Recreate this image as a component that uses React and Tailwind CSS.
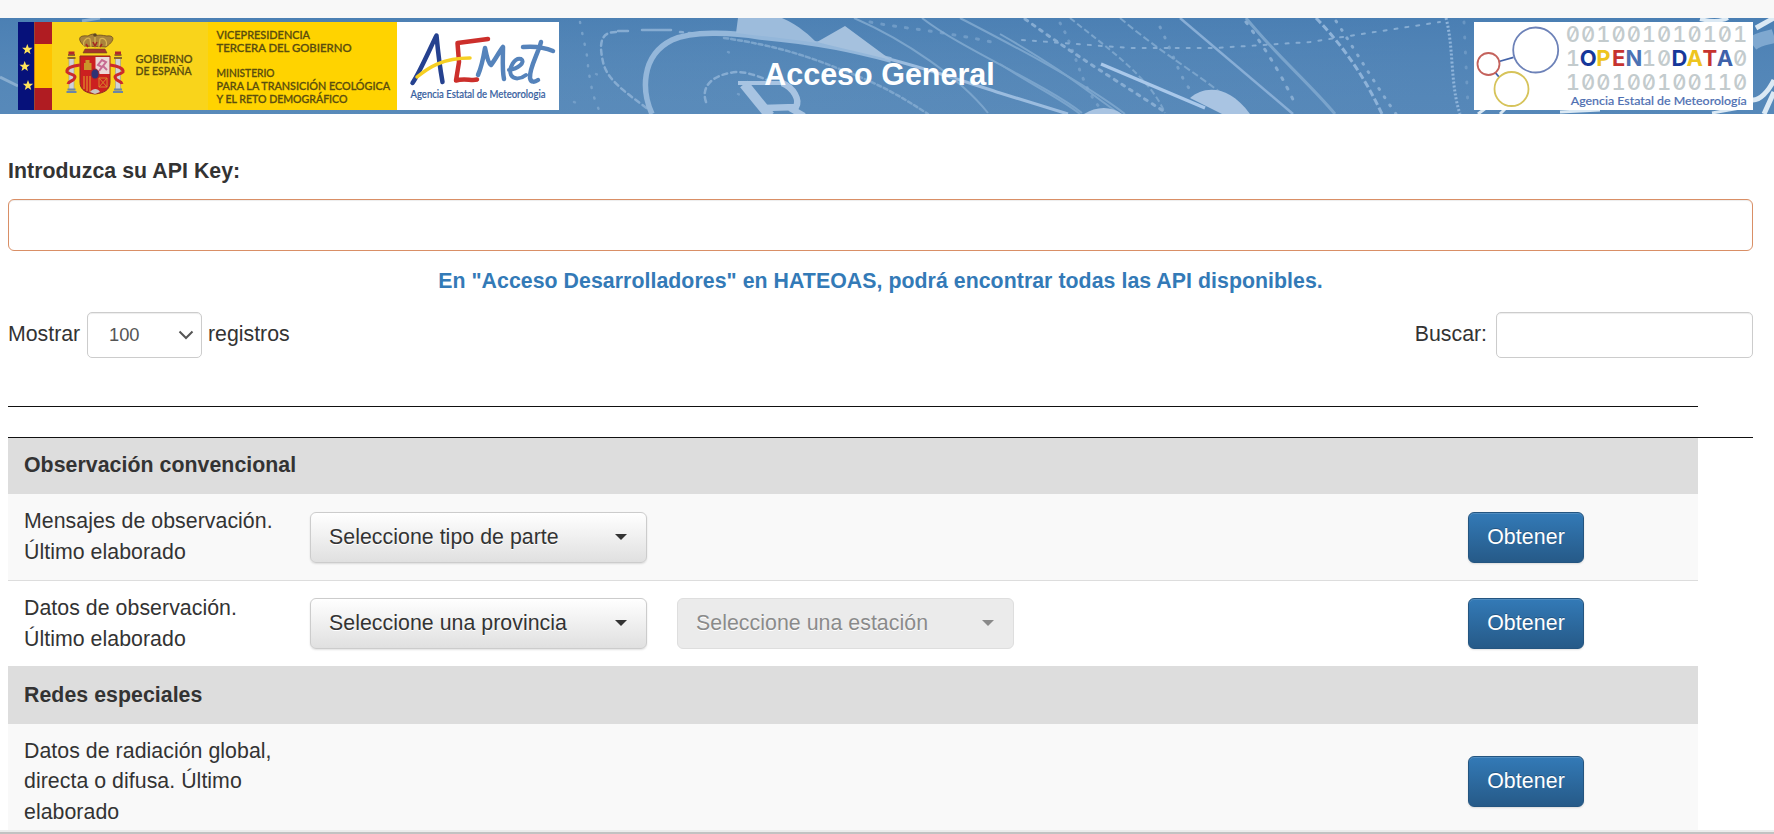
import React from "react";

const dots = { fill: "none", stroke: "#86acd2", strokeLinecap: "round" };

function BannerBackground() {
  return (
    <svg className="absolute inset-0 h-full w-full" viewBox="0 0 1774 96" preserveAspectRatio="none" aria-hidden="true">
      <defs>
        <linearGradient id="sky" x1="0" y1="0" x2="1" y2="0">
          <stop offset="0" stopColor="#5285b7" />
          <stop offset="0.45" stopColor="#5688b8" />
          <stop offset="0.8" stopColor="#5083b6" />
          <stop offset="1" stopColor="#5084b7" />
        </linearGradient>
        <linearGradient id="shade" x1="0" y1="0" x2="0" y2="1">
          <stop offset="0" stopColor="#447ab0" stopOpacity="0.5" />
          <stop offset="1" stopColor="#6795c0" stopOpacity="0.25" />
        </linearGradient>
      </defs>
      <rect width="1774" height="96" fill="url(#sky)" />
      <rect width="1774" height="96" fill="url(#shade)" />
      <g fill="none" stroke="#88add0" strokeWidth="3">
        <path d="M0 59 L18 68" />
        <path d="M82 3 L100 0" />
      </g>
      <g {...dots} strokeWidth="2.5">
        <path d="M580 4 C584 25 588 38 588 48 C590 62 592 78 600 94" strokeDasharray="1 10" opacity="0.7" />
        <path d="M618 13 L628 13 M642 12 L671 12" />
        <path d="M616 14 C598 14 600 30 603 44 C607 62 625 74 652 94" strokeDasharray="5 4" />
        <path d="M680 14 L700 16" strokeDasharray="3 6" />
        <path d="M724 20 C780 28 812 40 842 52 C880 66 900 78 928 96" strokeDasharray="4 3" opacity="0.8" />
        <path d="M706 84 C700 66 716 56 736 54 C750 54 762 60 772 64" strokeDasharray="5 4" />
        <path d="M574 84 L580 86 M596 56 L600 58 M728 34 L732 36 M738 76 L742 78" strokeDasharray="1 8" opacity="0.6" />
      </g>
      <path d="M652 96 C642 74 640 38 672 22 C692 13 730 14 760 19 C820 24 860 34 891 42" fill="none" stroke="#94b7da" strokeWidth="5.5" />
      <path d="M885 40 C925 50 960 62 1000 75 L1068 96" fill="none" stroke="#9bbcdf" strokeWidth="3" />
      <path d="M738 0 L782 0 C800 8 810 18 817 25 C790 21 760 18 736 15 Z" fill="#9dbcdc" />
      <path d="M817 24 L845 8 L891 42 C868 36 840 30 817 24 Z" fill="#a5c1de" />
      <g fill="none" stroke="#a8c4e2" strokeWidth="6.5">
        <path d="M738 65 L782 65" strokeWidth="4" />
        <path d="M744 66 L770 98" strokeWidth="10" />
        <path d="M782 65 C794 70 800 82 796 89 L764 90" />
        <path d="M790 90 L804 98" />
      </g>
      <g fill="none" stroke="#7aa4cc" strokeWidth="2">
        <path d="M854 0 C905 22 960 60 988 95" />
        <path d="M922 0 C960 30 1045 66 1082 95" />
        <path d="M960 0 C1010 26 1080 62 1125 96" />
        <path d="M1070 0 C1110 32 1150 60 1165 95" strokeDasharray="6 3" />
        <path d="M1120 0 C1160 34 1195 54 1222 76" strokeDasharray="7 3" />
        <path d="M1180 0 L1293 96" stroke="#88aed6" strokeWidth="2.5" />
        <path d="M1246 0 C1275 36 1310 66 1335 96" strokeWidth="3" />
        <path d="M1316 0 C1345 30 1365 60 1382 96" stroke="#8eb3d9" strokeWidth="3" strokeDasharray="7 3" />
        <path d="M1446 0 C1454 30 1450 66 1460 96" stroke="#8fb4da" strokeWidth="3" strokeDasharray="2 2" />
        <path d="M1000 16 C1070 56 1090 76 1120 96" />
        <path d="M1000 46 C1030 66 1060 80 1080 96" />
      </g>
      <g {...dots} strokeWidth="3">
        <path d="M1025 1 C1065 30 1090 46 1165 94" strokeDasharray="3 6" />
        <path d="M1022 22 L1130 30 L1215 30 L1310 24 L1440 4" strokeDasharray="3 8" strokeWidth="2" />
        <path d="M1060 5 C1075 30 1080 66 1100 90" strokeDasharray="1 9" opacity="0.6" />
        <path d="M1160 9 C1175 40 1180 60 1192 74" strokeDasharray="1 10" opacity="0.7" />
        <path d="M1246 4 C1272 40 1285 64 1296 88" strokeDasharray="2 9" />
        <path d="M1336 3 C1360 40 1375 66 1396 96" strokeDasharray="1 9" />
        <path d="M870 4 C900 10 950 14 1000 26" strokeDasharray="2 10" opacity="0.6" />
        <path d="M1464 4 L1468 90" strokeDasharray="1 14" opacity="0.5" />
      </g>
      <path d="M1101 46 L1205 90" stroke="#a9c8ea" strokeWidth="3.5" />
      <path d="M1190 80 C1204 68 1228 66 1250 96 L1222 96 Z" fill="#a9c4e2" />
      <path d="M1084 96 C1096 88 1112 88 1122 96 Z" fill="#a9c4e2" />
      <g fill="none" stroke="#dbe9f4" strokeWidth="4">
        <path d="M1700 1 C1712 4 1722 3 1728 0" />
        <path d="M1756 10 L1774 0" strokeWidth="5" />
        <path d="M1752 26 C1760 20 1768 20 1774 18" stroke="#7fa8d0" strokeWidth="14" />
        <path d="M1753 82 C1760 82 1768 74 1774 62 M1764 96 L1774 74" strokeWidth="5" />
        <path d="M1478 96 L1486 90 M1500 96 L1506 90 M1560 94 L1600 92 M1712 95 L1740 90" strokeWidth="3" />
      </g>
    </svg>
  );
}

function Star({ x, y }) {
  return (
    <path
      transform={`translate(${x} ${y})`}
      fill="#ffe45a"
      d="M0 -5.5 L1.4 -1.8 L5.2 -1.7 L2.2 .7 L3.2 4.5 L0 2.3 L-3.2 4.5 L-2.2 .7 L-5.2 -1.7 L-1.4 -1.8 Z"
    />
  );
}

function CoatOfArms() {
  return (
    <g>
      <path d="M66 24 C58 16 62 13 70 14 C74 11 79 12 76 14 C82 12 87 14 89 14 C96 13 98 18 88 25 Z" fill="#a9843c" stroke="#6b4a1e" strokeWidth=".8" />
      <path d="M67 27 L87 27 L89 31 L65 31 Z" fill="#a5342b" stroke="#6d4a20" strokeWidth=".6" />
      <path d="M66 24 C64 18 70 15 72 17 L73 25 M88 24 C90 18 85 15 82 17 L81 25 M77 13 L77 25" fill="none" stroke="#d9b550" strokeWidth="1.2" />
      <path d="M68 22 L70 25 M84 22 L82 25 M75 20 L77 24 L79 20" stroke="#a42a22" strokeWidth="1.6" fill="none" />
      <circle cx="77" cy="13" r="1.8" fill="#5f4724" />
      <path d="M62 34 H92 V60 C92 68 86 71 77 72 C68 71 62 68 62 60 Z" fill="#cc2020" stroke="#8d2c22" />
      <path d="M77.5 35 H91.5 V52 H77.5 Z" fill="#ecd8d8" />
      <path d="M81 49 L84 45 L80 43 L84 38 L88 40 L85 44 L89 48" fill="none" stroke="#c76b93" strokeWidth="2" />
      <path d="M66 48 V41 H67.500 V38 H71.500 V41 H73.500 V48 Z" fill="#c9952a" />
      <path d="M66 54 V67 M69 54 V69 M72 54 V70" stroke="#e0912a" strokeWidth="1.2" />
      <path d="M81 56 H89 V65 H81 Z M81 56 L89 65 M89 56 L81 65" fill="none" stroke="#d9852a" />
      <path d="M72 70 C75 66 80 66 82 70 L77 72 Z" fill="#c9c4c0" />
      <ellipse cx="77" cy="52" rx="4" ry="5" fill="#2d3274" stroke="#a3262a" />
      {[53.5, 100].map((x) => (
        <g key={x}>
          <rect x={x - 2.5} y="36" width="5" height="32" fill="#cfd3d8" stroke="#9a9a92" strokeWidth=".6" />
          <path d={`M${x - 4} 36 h8 M${x - 3.5} 33 h7`} stroke="#8c6a2a" strokeWidth="2" />
          <path d={`M${x - 3} 31 h6`} stroke="#b4282a" strokeWidth="3" />
          <path d={`M${x - 5} 70 h10 M${x - 4} 67.5 h8`} stroke="#6c86a6" strokeWidth="2" />
        </g>
      ))}
      <path d="M62 43 C54 44 48 46 49 50 C52 53 57 52 57 55 C56 60 51 58 50 62 M92 43 C99 44 106 46 105 50 C102 53 97 52 97 55 C98 60 103 58 104 62" fill="none" stroke="#cb2a2c" strokeWidth="3" />
    </g>
  );
}

function GovernmentLogo() {
  return (
    <svg className="h-[88px] w-[541px] shrink-0" viewBox="0 0 541 88">
      <rect width="541" height="88" fill="#fff" />
      <rect width="190" height="88" fill="#f9d41b" />
      <rect x="190" width="189" height="88" fill="#ffd300" />
      <rect width="16.5" height="88" fill="#06117a" />
      <rect x="16.5" width="17.5" height="88" fill="#b01c22" />
      <rect x="16.5" y="22" width="17.5" height="44" fill="#ffc400" />
      <Star x={9.3} y={27.5} />
      <Star x={6.7} y={44.5} />
      <Star x={10} y={63.5} />
      <CoatOfArms />
      <g fill="#5a4d0e" stroke="#5a4d0e" strokeWidth=".3" fontFamily="Lato, sans-serif" fontSize="11" fontWeight="500">
        <text x="117.5" y="41" textLength="57" lengthAdjust="spacingAndGlyphs">GOBIERNO</text>
        <text x="117.5" y="52.5" textLength="56" lengthAdjust="spacingAndGlyphs">DE ESPAÑA</text>
        <text x="198.5" y="16.5" textLength="93.5" lengthAdjust="spacingAndGlyphs">VICEPRESIDENCIA</text>
        <text x="198.5" y="29.5" textLength="135" lengthAdjust="spacingAndGlyphs">TERCERA DEL GOBIERNO</text>
        <text x="198.5" y="55" textLength="58" lengthAdjust="spacingAndGlyphs">MINISTERIO</text>
        <text x="198.5" y="67.7" textLength="173.5" lengthAdjust="spacingAndGlyphs">PARA LA TRANSICIÓN ECOLÓGICA</text>
        <text x="198.5" y="80.5" textLength="131" lengthAdjust="spacingAndGlyphs">Y EL RETO DEMOGRÁFICO</text>
      </g>
      <g fill="none" strokeLinecap="round" strokeLinejoin="round">
        <path d="M394.500 61 C402 50 414 22 418.500 13.500 C420 30 422 46 424.500 60" stroke="#25418f" strokeWidth="4.500" />
        <path d="M470 17 L439.500 21 L441 40 L438 58.500 C446 56 454 59 459 57.500" stroke="#cc2f2b" strokeWidth="4.500" />
        <path d="M399 55 C410 46 424 36 452 36" stroke="#f6cf22" strokeWidth="3.500" />
        <path d="M460 53 C464 44 466 32 467 26 C469 36 471 42 473 43 C477 38 481 30 485 25 C485 36 484 48 486 57" stroke="#5583bb" strokeWidth="4.500" />
        <path d="M491 48 C500 47 508 40 503 37 C497 35 490 46 493 53 C496 58 503 57 508 53" stroke="#5583bb" strokeWidth="4" />
        <path d="M523 20 C520 32 511 46 512 56 C513 61 517 60 520 58 M505 25 C516 24 528 26 535 29" stroke="#5583bb" strokeWidth="4.500" />
      </g>
      <text x="392.5" y="76.2" fontFamily="Lato, sans-serif" fontSize="11" fontWeight="500" fill="#385f9f" stroke="#385f9f" strokeWidth=".2" textLength="135" lengthAdjust="spacingAndGlyphs">Agencia Estatal de Meteorologia</text>
    </svg>
  );
}

const columns = [99, 114.2, 129.4, 144.6, 159.8, 175, 190.2, 205.4, 220.6, 235.8, 251, 266.2];

const digitRows = [
  { y: 20, chars: "001001010101" },
  { y: 44, chars: "1OPEN10DATA0" },
  { y: 67.5, chars: "100100100110" },
];

const letterColors = { 1: "#16389a", 2: "#eec51f", 3: "#c6332f", 4: "#4c72b4", 7: "#16389a", 8: "#eec51f", 9: "#c6332f", 10: "#3f62aa" };

function OpenDataLogo() {
  return (
    <svg className="h-[88px] w-[279px] shrink-0" viewBox="0 0 279 88">
      <rect width="279" height="88" fill="#fff" />
      <g fill="none" strokeWidth="1.8">
        <path d="M25 39.500 L39.500 35.300 M21.300 50.700 L25.500 55.500" stroke="#4463a8" />
        <circle cx="61.7" cy="28" r="22.5" stroke="#6d82b8" />
        <circle cx="14.5" cy="42" r="11" stroke="#c4625c" />
        <circle cx="37.5" cy="67" r="17" stroke="#d6c35a" />
      </g>
      <g fontFamily="Inter, sans-serif" fontSize="22" textAnchor="middle" className="[font-feature-settings:'zero','tnum']">
        {digitRows.map((row, r) =>
          row.chars.split("").map((c, i) => {
            const accent = r === 1 && letterColors[i];
            return (
              <text key={`${r}-${i}`} x={columns[i]} y={row.y} fill={accent || "#c3cbcd"} fontWeight={accent ? 700 : 500}>
                {c}
              </text>
            );
          })
        )}
      </g>
      <text x="96.7" y="82.5" fontFamily="Lato, sans-serif" fontSize="12" fontWeight="500" fill="#4f70b2" stroke="#4f70b2" strokeWidth=".15" textLength="176" lengthAdjust="spacingAndGlyphs">Agencia Estatal de Meteorología</text>
    </svg>
  );
}

function PickerButton({ children, disabled }) {
  return (
    <button
      disabled={disabled}
      className={
        disabled
          ? "flex h-[51px] w-[337px] items-center justify-between rounded-[6px] border border-[#dedede] bg-[#ebebeb] pr-[19px] pb-px pl-[18px] tracking-[0.05px] text-[#8a8a8a] [text-shadow:0_1px_0_#fff]"
          : "flex h-[51px] w-[337px] items-center justify-between rounded-[6px] border border-[#ccc] bg-linear-to-b from-white to-[#e0e0e0] pr-[19px] pb-px pl-[18px] tracking-[0.05px] text-[#333] shadow-[inset_0_1px_0_rgba(255,255,255,0.15),0_1px_2px_rgba(0,0,0,0.12)] [text-shadow:0_1px_0_#fff]"
      }
    >
      <span>{children}</span>
      <span className="border-x-[6px] border-t-[6px] border-x-transparent border-t-current" />
    </button>
  );
}

function GetButton() {
  return (
    <button className="h-[51px] w-[116px] rounded-[6px] border border-[#245580] bg-linear-to-b from-[#337ab7] to-[#265a88] pb-px tracking-[0.1px] text-white shadow-[inset_0_1px_0_rgba(255,255,255,0.15),0_1px_2px_rgba(0,0,0,0.12)] [text-shadow:0_-1px_0_rgba(0,0,0,0.25)]">
      Obtener
    </button>
  );
}

function GroupRow({ className, children }) {
  return <div className={`flex w-[1690px] items-center bg-[#ddd] px-4 font-bold tracking-[0.05px] ${className}`}>{children}</div>;
}

function DataRow({ className, lines, children }) {
  return (
    <div className={`flex w-[1690px] items-center pl-4 ${className}`}>
      <div className="w-[286px] shrink-0 leading-[30.600px] tracking-[0.05px]">
        {lines.map((line) => (
          <div key={line}>{line}</div>
        ))}
      </div>
      <div className="flex flex-1 gap-[30px]">{children}</div>
      <div className="w-[230px] shrink-0">
        <GetButton />
      </div>
    </div>
  );
}

export default function App() {
  return (
    <div className="flex h-[834px] w-[1774px] flex-col overflow-hidden bg-white font-['Liberation_Sans',Arial,sans-serif] text-[21.300px] leading-[30px] text-[#333]">
      <div className="h-[18px] shrink-0 bg-[#f8f8f8]" />
      <header className="relative h-24 shrink-0">
        <BannerBackground />
        <div className="relative flex h-full items-center justify-between pr-[21px] pl-[18px]">
          <GovernmentLogo />
          <h1 className="mr-[274px] pt-4 text-[30.500px] leading-none font-bold text-white">Acceso General</h1>
          <OpenDataLogo />
        </div>
      </header>

      <main className="flex min-h-0 flex-1 flex-col overflow-hidden pt-[42px] pr-[21px] pl-2">
        <label htmlFor="apikey" className="h-[30px] shrink-0 font-bold tracking-[0.05px]">
          Introduzca su API Key:
        </label>
        <input id="apikey" className="mt-[13px] h-[52px] shrink-0 rounded-[6px] border border-[#d98f66] px-4 shadow-[inset_0_1px_1px_rgba(0,0,0,0.075)]" />
        <p className="mt-[15px] h-[30px] shrink-0 text-center font-bold tracking-[0.05px] text-[#337ab7]">
          En "Acceso Desarrolladores" en HATEOAS, podrá encontrar todas las API disponibles.
        </p>
        <div className="mt-4 flex h-[46px] shrink-0 items-center justify-between">
          <div className="flex items-center">
            <span className="w-[79px] pb-[2px]">Mostrar</span>
            <div className="flex h-[46px] w-[115px] items-center justify-between rounded-[5px] border border-[#ccc] pr-[7px] pl-[21px] text-[18.300px] text-[#555] shadow-[inset_0_1px_1px_rgba(0,0,0,0.075)]">
              <span>100</span>
              <svg width="16" height="10" viewBox="0 0 16 10" fill="none" stroke="#555" strokeWidth="2">
                <path d="M1.500 1.500 L8 8 L14.500 1.500" />
              </svg>
            </div>
            <span className="ml-[6px] pb-[2px]">registros</span>
          </div>
          <label className="flex items-center">
            <span className="pb-[2px]">Buscar:</span>
            <input className="ml-[9px] h-[46px] w-[257px] rounded-[5px] border border-[#ccc] px-4 shadow-[inset_0_1px_1px_rgba(0,0,0,0.075)]" />
          </label>
        </div>
        <div className="mt-12 h-px w-[1690px] shrink-0 bg-[#111]" />
        <div className="mt-[30px] h-px shrink-0 bg-[#111]" />
        <GroupRow className="h-14 shrink-0 pb-[2px]">Observación convencional</GroupRow>
        <DataRow className="h-[86px] shrink-0 bg-[#f9f9f9]" lines={["Mensajes de observación.", "Último elaborado"]}>
          <PickerButton>Seleccione tipo de parte</PickerButton>
        </DataRow>
        <DataRow className="h-[86px] shrink-0 border-t border-[#ddd]" lines={["Datos de observación.", "Último elaborado"]}>
          <PickerButton>Seleccione una provincia</PickerButton>
          <PickerButton disabled>Seleccione una estación</PickerButton>
        </DataRow>
        <GroupRow className="h-[58px] shrink-0">Redes especiales</GroupRow>
        <DataRow className="h-[115px] shrink-0 bg-[#f9f9f9]" lines={["Datos de radiación global,", "directa o difusa. Último", "elaborado"]} />
      </main>
      <div className="h-1 shrink-0 border-t-2 border-[#ececec] bg-[#c2c2c2]" />
    </div>
  );
}
